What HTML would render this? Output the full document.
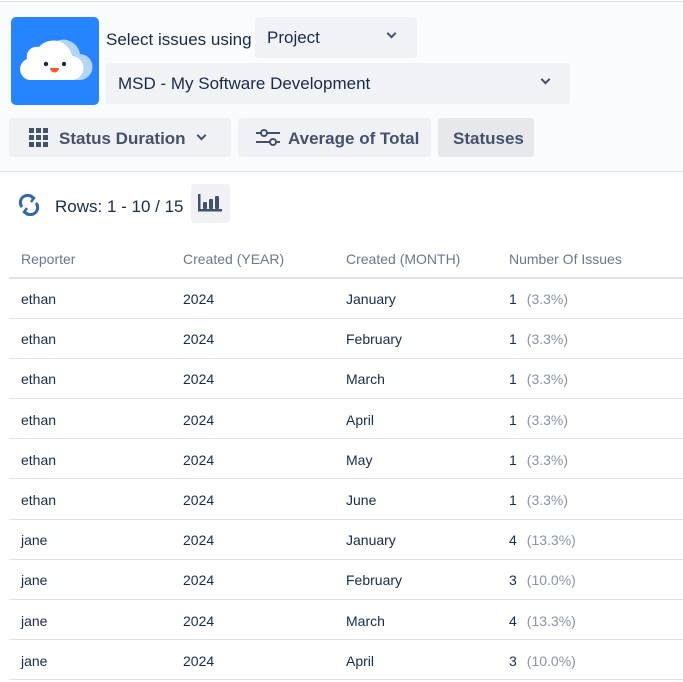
<!DOCTYPE html>
<html><head><style>
*{margin:0;padding:0;box-sizing:border-box}
body{width:683px;height:682px;background:#fff;font-family:"Liberation Sans",sans-serif;color:#172b4d;position:relative;overflow:hidden}
.hdr{position:absolute;left:0;top:1px;width:683px;height:171px;background:#fafbfc;border-top:1px solid #dfe1e6;border-bottom:1px solid #dfe1e6}
.abs{position:absolute}
.sel{position:absolute;background:#f1f2f5;border-radius:3px;font-size:17px;color:#172b4d;padding-left:12px;line-height:41px}
.chev{position:absolute;width:7px;height:7px;border-right:2.5px solid #42526e;border-bottom:2.5px solid #42526e;transform:rotate(45deg)}
.btn{position:absolute;top:118px;height:39px;background:#f0f1f4;border-radius:3px;font-size:17px;color:#42526e;line-height:41px;font-weight:bold}
table{position:absolute;left:9px;top:238px;width:674px;border-collapse:collapse;font-size:14px}
th{text-align:left;font-weight:normal;color:#6b778c;height:40px;border-bottom:2px solid #dfe1e6;padding-left:12px;padding-top:2px}
td{height:40.2px;border-bottom:1px solid #dfe1e6;padding-left:12px;color:#172b4d;padding-top:2px}
.p{color:#8993a4;margin-left:10px}
</style></head><body>
<div class="hdr"></div>
<div class="abs" style="left:11px;top:17px;width:88px;height:88px;background:#2684ff;border-radius:5px">
<svg width="88" height="88" viewBox="0 0 88 88">
<path d="M30 63 H68 a13 13 0 0 0 1 -26 a17 17 0 0 0 -30 -8 Z" fill="#b3d4ff"/>
<path d="M18 63 H60 a12 12 0 0 0 1 -24 a19 19 0 0 0 -33 -9 a10 10 0 0 0 -12 12 a11 11 0 0 0 2 21 Z" fill="#fff"/>
<circle cx="35" cy="47" r="2.2" fill="#172b4d"/><circle cx="53" cy="47" r="2.2" fill="#172b4d"/>
<path d="M39 51 h9 a4.5 4.5 0 0 1 -9 0Z" fill="#ff5630"/>
</svg></div>
<div class="abs" style="left:106px;top:30px;font-size:17px">Select issues using</div>
<div class="sel" style="left:255px;top:17px;width:162px">Project<div class="chev" style="left:133px;top:13px"></div></div>
<div class="sel" style="left:106px;top:63px;width:464px">MSD - My Software Development<div class="chev" style="left:436px;top:13px"></div></div>
<div class="btn" style="left:9px;width:222px">
<svg class="abs" style="left:20px;top:10px" width="19" height="19"><g fill="#42526e"><rect x="0" y="0" width="5" height="5"/><rect x="7" y="0" width="5" height="5"/><rect x="14" y="0" width="5" height="5"/><rect x="0" y="7" width="5" height="5"/><rect x="7" y="7" width="5" height="5"/><rect x="14" y="7" width="5" height="5"/><rect x="0" y="14" width="5" height="5"/><rect x="7" y="14" width="5" height="5"/><rect x="14" y="14" width="5" height="5"/></g></svg>
<span class="abs" style="left:50px">Status Duration</span><div class="chev" style="left:189px;top:14px"></div></div>
<div class="btn" style="left:238px;width:193px">
<svg class="abs" style="left:18px;top:10px" width="24" height="20" fill="none" stroke="#42526e" stroke-width="2"><line x1="0" y1="5" x2="24" y2="5"/><line x1="0" y1="14" x2="24" y2="14"/><circle cx="8" cy="5" r="3" fill="#f0f1f4"/><circle cx="17" cy="14" r="3" fill="#f0f1f4"/></svg>
<span class="abs" style="left:50px">Average of Total</span></div>
<div class="btn" style="left:438px;width:96px;background:#e7e8ec;padding-left:15px">Statuses</div>
<svg class="abs" style="left:18px;top:194px" width="22" height="22" fill="none" stroke="#2f6aa7" stroke-width="3"><path d="M4 13 A7 7 0 0 1 15 4"/><path d="M18 9 A7 7 0 0 1 7 18"/><path d="M12 1 l4 3 l-3 4" stroke-width="2.5"/><path d="M10 21 l-4 -3 l3 -4" stroke-width="2.5"/></svg>
<div class="abs" style="left:55px;top:197px;font-size:17px">Rows: 1 - 10 / 15</div>
<div class="abs" style="left:191px;top:184px;width:39px;height:39px;background:#f0f1f4;border-radius:3px">
<svg class="abs" style="left:7px;top:10px" width="24" height="18" fill="#42526e"><rect x="0" y="0" width="2.5" height="17"/><rect x="0" y="15" width="24" height="2.5"/><rect x="5" y="8" width="4" height="7" rx="1"/><rect x="11" y="5" width="4" height="10" rx="1"/><rect x="17" y="2" width="4" height="13" rx="1"/></svg></div>
<table>
<tr><th style="width:162px">Reporter</th><th style="width:163px">Created (YEAR)</th><th style="width:163px">Created (MONTH)</th><th>Number Of Issues</th></tr>
<tr><td>ethan</td><td>2024</td><td>January</td><td>1<span class="p">(3.3%)</span></td></tr>
<tr><td>ethan</td><td>2024</td><td>February</td><td>1<span class="p">(3.3%)</span></td></tr>
<tr><td>ethan</td><td>2024</td><td>March</td><td>1<span class="p">(3.3%)</span></td></tr>
<tr><td>ethan</td><td>2024</td><td>April</td><td>1<span class="p">(3.3%)</span></td></tr>
<tr><td>ethan</td><td>2024</td><td>May</td><td>1<span class="p">(3.3%)</span></td></tr>
<tr><td>ethan</td><td>2024</td><td>June</td><td>1<span class="p">(3.3%)</span></td></tr>
<tr><td>jane</td><td>2024</td><td>January</td><td>4<span class="p">(13.3%)</span></td></tr>
<tr><td>jane</td><td>2024</td><td>February</td><td>3<span class="p">(10.0%)</span></td></tr>
<tr><td>jane</td><td>2024</td><td>March</td><td>4<span class="p">(13.3%)</span></td></tr>
<tr><td>jane</td><td>2024</td><td>April</td><td>3<span class="p">(10.0%)</span></td></tr>
</table>
</body></html>
